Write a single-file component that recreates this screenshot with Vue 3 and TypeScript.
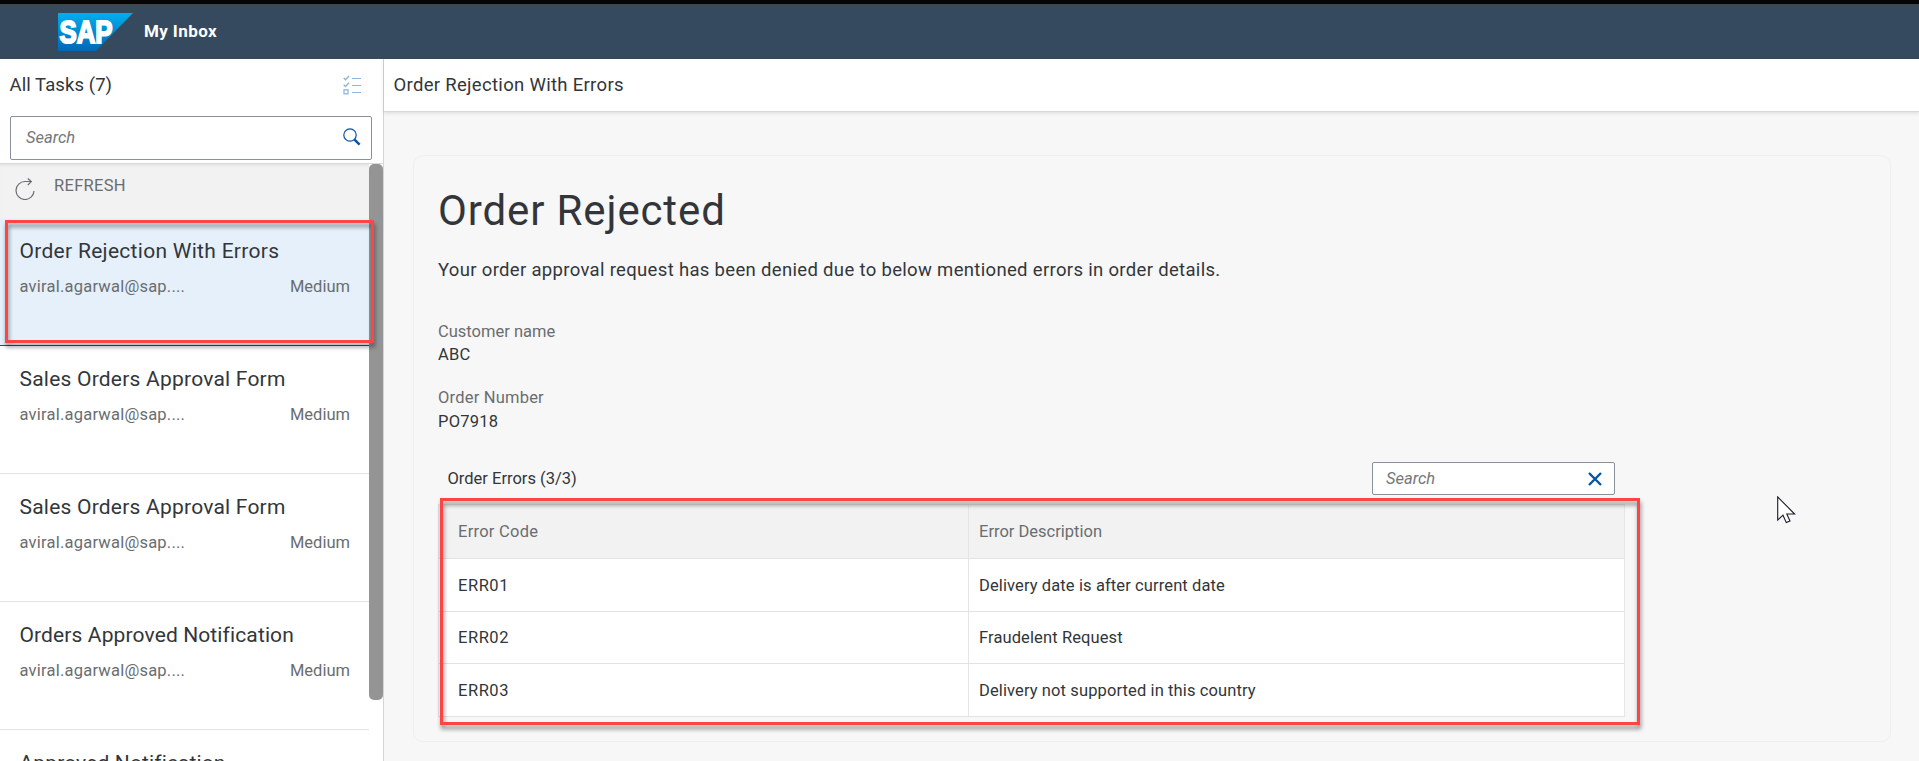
<script setup lang="ts">
interface Task {
  title: string
  sender: string
  priority: string
  selected?: boolean
  spacing: string
}
interface OrderError {
  code: string
  description: string
}

const tasks: Task[] = [
  { title: 'Order Rejection With Errors', sender: 'aviral.agarwal@sap....', priority: 'Medium', selected: true, spacing: 'wide' },
  { title: 'Sales Orders Approval Form', sender: 'aviral.agarwal@sap....', priority: 'Medium', spacing: 'medium' },
  { title: 'Sales Orders Approval Form', sender: 'aviral.agarwal@sap....', priority: 'Medium', spacing: 'medium' },
  { title: 'Orders Approved Notification', sender: 'aviral.agarwal@sap....', priority: 'Medium', spacing: 'narrow' },
  { title: 'Approved Notification', sender: 'aviral.agarwal@sap....', priority: 'Medium', spacing: 'narrow' },
]

const errors: OrderError[] = [
  { code: 'ERR01', description: 'Delivery date is after current date' },
  { code: 'ERR02', description: 'Fraudelent Request' },
  { code: 'ERR03', description: 'Delivery not supported in this country' },
]
</script>

<template>
  <div class="app">
    <header class="shell">
      <svg class="logo" width="75" height="38" viewBox="0 0 75 38">
        <defs>
          <linearGradient id="sapBlue" x1="0" y1="0" x2="0" y2="1">
            <stop offset="0" stop-color="#00aeef" />
            <stop offset="1" stop-color="#0067b6" />
          </linearGradient>
        </defs>
        <path d="M0 0H75L38 38H0Z" fill="url(#sapBlue)" />
        <text class="logo-text" x="1.5" y="30" textLength="53" lengthAdjust="spacingAndGlyphs">SAP</text>
      </svg>
      <span class="shell-title">My Inbox</span>
    </header>

    <div class="body">
      <aside class="master">
        <div class="master-head">
          <span class="master-title">All Tasks (7)</span>
          <svg class="multi" width="18" height="20" viewBox="0 0 18 20" fill="none" stroke="#91b5da">
            <path d="M9 3.5H18M9 10.5H18M9 17.5H18" />
            <path d="M.7 3L2.5 4.8L6 1M.7 9.7L2.5 11.5L6 7.7" stroke-width="1.4" />
            <rect x="1" y="14.8" width="4" height="4" stroke-width="1.3" />
          </svg>
        </div>
        <div class="search">
          <span class="placeholder">Search</span>
          <svg class="glass" width="18" height="18" viewBox="0 0 18 18" fill="none" stroke="#0854a0">
            <circle cx="7" cy="7" r="6.2" stroke-width="1.2" />
            <path d="M11.3 11.3L16.6 16.6" stroke-width="2.4" />
          </svg>
        </div>
        <div class="list">
          <div class="items">
            <div class="refresh">
              <svg width="20" height="22" viewBox="0 0 20 22" fill="none" stroke="#6a6d70" stroke-width="1.2">
                <path d="M19 13A9 9 0 1 1 10 3.5H16.5" />
                <path d="M12.8 .5L16.3 3.6L12.8 7" />
              </svg>
              <span>REFRESH</span>
            </div>
            <div v-for="(t, i) in tasks" :key="i" class="task" :class="{ selected: t.selected }">
              <div class="task-title" :class="t.spacing">{{ t.title }}</div>
              <div class="task-meta">
                <span class="sender">{{ t.sender }}</span>
                <span class="priority">{{ t.priority }}</span>
              </div>
              <div v-if="t.selected" class="mark mark-task"></div>
            </div>
          </div>
          <div class="track"><div class="thumb"></div></div>
        </div>
      </aside>

      <main class="detail">
        <div class="detail-head"><span>Order Rejection With Errors</span></div>
        <section class="card">
          <h1>Order Rejected</h1>
          <p class="intro">Your order approval request has been denied due to below mentioned errors in order details.</p>
          <dl>
            <dt>Customer name</dt>
            <dd>ABC</dd>
            <dt class="loose">Order Number</dt>
            <dd>PO7918</dd>
          </dl>
          <div class="toolbar">
            <span class="toolbar-title">Order Errors (3/3)</span>
            <div class="search small">
              <span class="placeholder">Search</span>
              <svg width="14" height="14" viewBox="0 0 14 14" fill="none" stroke="#0854a0" stroke-width="2.4">
                <path d="M1 1L13 13M13 1L1 13" />
              </svg>
            </div>
          </div>
          <div class="table-wrap">
            <div class="table">
              <div class="row head">
                <div class="cell">Error Code</div>
                <div class="cell">Error Description</div>
              </div>
              <div v-for="e in errors" :key="e.code" class="row">
                <div class="cell code">{{ e.code }}</div>
                <div class="cell">{{ e.description }}</div>
              </div>
            </div>
            <div class="mark mark-table"></div>
          </div>
        </section>
      </main>
    </div>

    <svg class="cursor" width="19" height="28" viewBox="0 0 19 28">
      <path d="M.7 .9V24L6 19.2L9.3 26.6L13 25L9.8 18H17.6Z" fill="#fff" stroke="#1b1b28" stroke-width="1.1" />
    </svg>
  </div>
</template>

<style>
html,
body {
  margin: 0;
  overflow: hidden;
}
</style>

<style scoped>
* {
  box-sizing: border-box;
}
.app {
  position: relative;
  display: flex;
  flex-direction: column;
  width: 100vw;
  height: 761px;
  overflow: hidden;
  background: #f7f7f7;
  color: #32363a;
  font-family: Roboto, "Liberation Sans", sans-serif;
  font-size: 16.5px;
  line-height: 20px;
  white-space: nowrap;
}
.shell {
  display: flex;
  flex: none;
  align-items: center;
  gap: 11px;
  height: 59px;
  padding: 3px 0 2px 58px;
  background: #354a5f;
  border-top: 4px solid #050505;
  box-shadow: inset 0 2px 0 #41464b;
}
.logo {
  display: block;
}
.logo-text {
  font-family: "Liberation Sans", sans-serif;
  font-weight: 700;
  font-size: 32px;
  fill: #fff;
  stroke: #fff;
  stroke-width: 2px;
}
.shell-title {
  margin-bottom: 2px;
  color: #fff;
  font-size: 17px;
  font-weight: 700;
  letter-spacing: 0.4px;
}
.body {
  display: flex;
  flex: 1;
  min-height: 0;
}
.master {
  display: flex;
  flex-direction: column;
  flex: none;
  width: 384px;
  background: #fff;
  border-right: 1px solid #d5d5d5;
}
.master-head {
  display: flex;
  flex: none;
  align-items: center;
  justify-content: space-between;
  height: 52px;
  padding: 0 22px 0 9.5px;
  font-size: 18.5px;
  letter-spacing: 0.08px;
}
.search {
  display: flex;
  flex: none;
  align-items: center;
  justify-content: space-between;
  width: 362px;
  height: 44px;
  margin: 5px 0 0 10px;
  padding: 0 10px 0 15px;
  background: #fff;
  border: 1px solid #89919a;
  border-radius: 2px;
}
.glass {
  margin-bottom: 2px;
}
.placeholder {
  color: #74777a;
  font-style: italic;
}
.search.small {
  width: 243px;
  height: 33px;
  margin: 0;
  padding: 0 12px 0 13px;
}
.list {
  display: flex;
  flex: 1;
  min-height: 0;
  margin-top: 3px;
  border-top: 1px solid #d9d9d9;
}
.items {
  width: 369px;
}
.refresh {
  display: flex;
  gap: 19px;
  height: 54px;
  padding: 12px 0 0 15px;
  background: #f2f2f2;
  color: #6a6d70;
  box-shadow: inset 0 3px 3px -2px #dedede;
  letter-spacing: 0.3px;
}
.refresh svg {
  margin-top: 2px;
}
.task {
  position: relative;
  height: 128px;
  padding: 20px 19px 0 19.5px;
  border-bottom: 1px solid #e4e4e4;
}
.task.selected {
  background: #e5f0fa;
  border-bottom-color: #0854a0;
}
.task-title {
  font-size: 21px;
  line-height: 26px;
}
.task-title.wide {
  letter-spacing: 0.29px;
}
.task-title.medium {
  letter-spacing: 0.22px;
}
.task-title.narrow {
  letter-spacing: 0.12px;
}
.task-meta {
  display: flex;
  justify-content: space-between;
  margin-top: 13px;
  color: #6a6d70;
}
.sender {
  letter-spacing: 0.22px;
}
.track {
  width: 14px;
}
.thumb {
  height: 536px;
  background: #949494;
  border-radius: 5px;
}
.mark {
  position: absolute;
  z-index: 2;
  border: 3px solid #fe4446;
  filter: drop-shadow(1px 4px 2px rgba(0, 0, 0, 0.45));
}
.mark-task {
  left: 5px;
  top: 2px;
  width: 369px;
  height: 123px;
}
.detail {
  flex: 1;
  min-width: 0;
}
.detail-head {
  display: flex;
  align-items: center;
  height: 53px;
  padding-left: 9.5px;
  background: #fff;
  border-bottom: 1px solid #d9d9d9;
  box-shadow: 0 1px 4px rgba(0, 0, 0, 0.12);
  font-size: 18.5px;
  letter-spacing: 0.31px;
}
.card {
  width: 1478px;
  height: 587px;
  margin: 43px 0 0 29px;
  padding: 30px 24px 0;
  border: 1px solid #efefef;
  border-radius: 10px;
}
h1 {
  margin: 0;
  font-size: 42px;
  font-weight: 400;
  letter-spacing: 0.87px;
  line-height: 50px;
}
.intro {
  margin: 22px 0 0;
  font-size: 18.5px;
  letter-spacing: 0.325px;
  line-height: 24px;
}
dl {
  margin: 40px 0 0;
}
dt {
  color: #6a6d70;
}
dt.loose {
  letter-spacing: 0.2px;
}
dd {
  margin: 3px 0 23px;
  letter-spacing: 0.25px;
}
dd:last-child {
  margin: 4px 0 0;
}
.toolbar {
  display: flex;
  align-items: center;
  justify-content: space-between;
  width: 1177px;
  height: 33px;
  margin-top: 30px;
  padding-left: 9.5px;
}
.table-wrap {
  position: relative;
  width: 1187px;
  margin-top: 9px;
}
.table {
  border: 1px solid #e5e5e5;
  border-bottom: 0;
}
.row {
  display: grid;
  grid-template-columns: 530px 1fr;
  height: 53px;
  background: #fff;
  border-bottom: 1px solid #e2e2e2;
}
.row:nth-child(3) {
  height: 52px;
}
.row.head {
  height: 54px;
  background: #f2f2f2;
  color: #6a6d70;
}
.cell {
  display: flex;
  align-items: center;
  padding: 1px 0 0 10px;
  letter-spacing: 0.11px;
}
.cell:first-child {
  padding-left: 19px;
  border-right: 1px solid #e5e5e5;
  letter-spacing: 0.25px;
}
.cell.code:first-child {
  letter-spacing: 0.55px;
}
.row.head .cell:last-child {
  letter-spacing: 0;
}
.mark-table {
  left: 2px;
  top: -6px;
  width: 1200px;
  height: 227px;
}
.cursor {
  position: absolute;
  left: 1777px;
  top: 496px;
}
</style>
